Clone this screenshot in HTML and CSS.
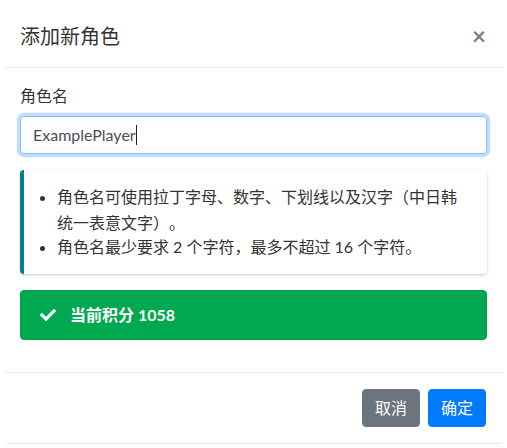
FILE: index.html
```html
<!DOCTYPE html>
<html lang="zh">
<head>
<meta charset="utf-8">
<title>添加新角色</title>
<link rel="stylesheet" href="styles.css">
</head>
<body>
<div class="modal">
  <div class="modal-header">
    <h5 class="modal-title">添加新角色</h5>
    <button class="close" type="button" aria-label="Close">×</button>
  </div>
  <div class="modal-body">
    <div class="form-group">
      <label class="label">角色名</label>
      <div class="form-control focus"><span>ExamplePlayer</span><span class="caret"></span></div>
    </div>
    <div class="callout">
      <ul class="rules">
        <li>角色名可使用拉丁字母、数字、下划线以及汉字（中日韩统一表意文字）。</li>
        <li>角色名最少要求 2 个字符，最多不超过 16 个字符。</li>
      </ul>
    </div>
    <div class="alert-success">
      <svg class="check" viewBox="0 0 512 512" width="16" height="16"><path fill="#fff" d="M173.898 439.404l-166.4-166.4c-9.997-9.997-9.997-26.206 0-36.204l36.203-36.204c9.997-9.998 26.207-9.998 36.204 0L192 312.69 432.095 72.596c9.997-9.997 26.207-9.997 36.204 0l36.203 36.204c9.997 9.997 9.997 26.206 0 36.204l-294.4 294.401c-9.998 9.997-26.207 9.997-36.204-.001z"/></svg>
      <span class="score">当前积分 1058</span>
    </div>
  </div>
  <div class="modal-footer">
    <button class="btn btn-secondary" type="button">取消</button>
    <button class="btn btn-primary" type="button">确定</button>
  </div>
</div>
</body>
</html>
```
FILE: styles.css
```css
* { box-sizing: border-box; }
html, body { margin: 0; padding: 0; background: #fff; }
body {
  font-family: Lato, "Noto Sans CJK SC", sans-serif;
  font-size: 16px;
  line-height: 1.5;
  color: #333;
  text-spacing-trim: space-all;
}
.modal {
  margin: 5px 4px 0 4px;
  width: 499px;
  border: 1px solid transparent;
  border-bottom-color: #e6e6e6;
  border-radius: 4.8px;
  background: #fff;
}
.modal-header {
  display: flex;
  align-items: flex-start;
  justify-content: space-between;
  padding: 15px 15px 16px 15px;
  border-bottom: 1px solid #e9ecef;
}
.modal-title {
  margin: 0;
  font-size: 20px;
  font-weight: 400;
  line-height: 30px;
  color: #333;
}
.close {
  border: 0;
  background: transparent;
  padding: 0;
  margin: 0 1px 0 0;
  font-family: Lato, sans-serif;
  font-size: 24px;
  font-weight: 700;
  line-height: 30px;
  color: #000;
  opacity: .5;
}
.modal-body {
  padding: 16px 15px;
}
.form-group { margin-bottom: 16px; }
.label {
  display: block;
  margin-bottom: 8px;
  line-height: 24px;
}
.form-control {
  display: flex;
  align-items: center;
  height: 38px;
  padding: 6px 12px;
  border: 1px solid #ced4da;
  border-radius: 4px;
  color: #495057;
}
.form-control.focus {
  border-color: #80bdff;
  box-shadow: 0 0 0 3.2px rgba(0,123,255,.25);
}
.caret {
  display: inline-block;
  width: 1px;
  height: 20px;
  background: #222;
}
.callout {
  border-left: 4px solid #00808a;
  border-radius: 4px;
  box-shadow: 0 1px 3px rgba(0,0,0,.22);
  padding: 14px 16px 14px 12px;
  margin-bottom: 16px;
}
.rules {
  margin: 0;
  padding-left: 21px;
  line-height: 26px;
}
.rules li + li { margin-top: -2px; }
.alert-success {
  display: flex;
  align-items: center;
  height: 50px;
  padding: 12px 19px;
  background: #00a84f;
  border: 1px solid #00a04b;
  border-radius: 4px;
  color: #fff;
  font-weight: 700;
  margin-bottom: 16px;
}
.check { margin-right: 14px; flex: none; }
.modal-footer {
  display: flex;
  justify-content: flex-end;
  align-items: center;
  padding: 12px;
  border-top: 1px solid #e9ecef;
}
.btn {
  margin: 4px;
  height: 38px;
  padding: 6px 12px;
  border: 1px solid transparent;
  border-radius: 4px;
  font-family: Lato, "Noto Sans CJK SC", sans-serif;
  font-size: 16px;
  line-height: 24px;
  color: #fff;
}
.btn-secondary { background: #6c757d; border-color: #6c757d; }
.btn-primary { background: #007bff; border-color: #007bff; }
```
